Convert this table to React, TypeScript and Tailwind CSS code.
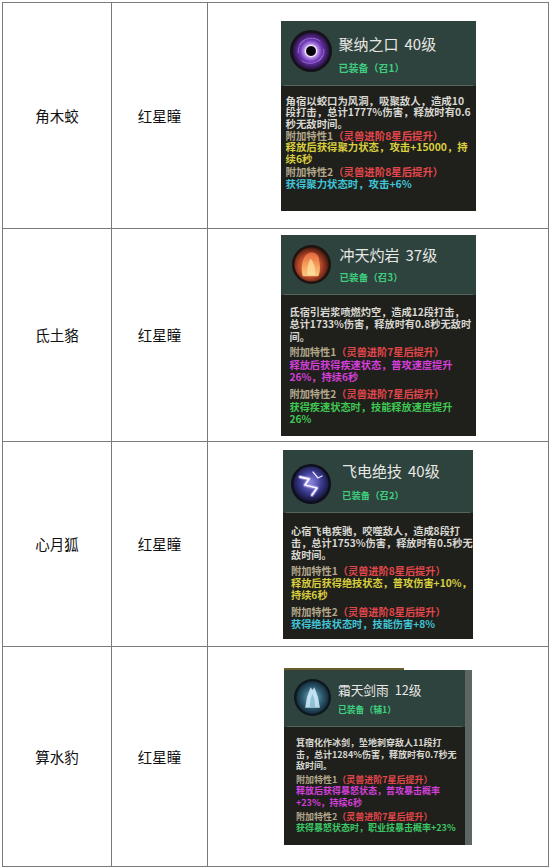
import React from 'react'

type Trait = { req: string; lines: string[]; color: string }

interface Skill {
  title: string
  level: string
  equip: string
  icon: 'vortex' | 'flame' | 'bolt' | 'ice'
  desc: string[]
  t1: Trait
  t2: Trait
  // per-card measurements taken from the screenshot
  box: string
  head: string
  pad: string
  icon_: string
  texts: string
  titleCls: string
  subCls: string
  body: string
  gap1: string
  gap2: string
  framed?: boolean
}

const YELLOW = 'text-[#d9cf3e]'
const CYAN = 'text-[#40c4d6]'
const MAGENTA = 'text-[#d33fd8]'
const GREEN = 'text-[#3fc852]'

const skills: Skill[] = [
  {
    title: '聚纳之口',
    level: '40级',
    equip: '已装备（召1）',
    icon: 'vortex',
    desc: ['角宿以蛟口为风洞，吸聚敌人，造成10', '段打击，总计1777%伤害，释放时有0.6', '秒无敌时间。'],
    t1: { req: '（灵兽进阶8星后提升）', lines: ['释放后获得聚力状态，攻击+15000，持', '续6秒'], color: YELLOW },
    t2: { req: '（灵兽进阶8星后提升）', lines: ['获得聚力状态时，攻击+6%'], color: CYAN },
    box: 'w-[195px] h-[190px]',
    head: 'h-[65px]',
    pad: 'pl-[9px]',
    icon_: 'mt-[9px] w-[42px] h-[42px]',
    texts: 'ml-[7px] mt-[14px]',
    titleCls: 'text-[15px] leading-[18px]',
    subCls: 'mt-[8px] text-[10px] leading-[14px]',
    body: 'pt-[9px] pl-[5px] text-[10.4px] leading-[11.7px]',
    gap1: 'h-0',
    gap2: 'h-[1.6px]',
  },
  {
    title: '冲天灼岩',
    level: '37级',
    equip: '已装备（召3）',
    icon: 'flame',
    desc: ['氐宿引岩浆喷燃灼空，造成12段打击，', '总计1733%伤害，释放时有0.8秒无敌时', '间。'],
    t1: { req: '（灵兽进阶7星后提升）', lines: ['释放后获得疾速状态，普攻速度提升', '26%，持续6秒'], color: MAGENTA },
    t2: { req: '（灵兽进阶7星后提升）', lines: ['获得疾速状态时，技能释放速度提升', '26%'], color: GREEN },
    box: 'w-[195px] h-[201px]',
    head: 'h-[60px]',
    pad: 'pl-[11px]',
    icon_: 'mt-[10px] w-[39px] h-[39px]',
    texts: 'ml-[9px] mt-[11px]',
    titleCls: 'text-[15px] leading-[18px]',
    subCls: 'mt-[6px] text-[9.6px] leading-[14px]',
    body: 'pt-[11px] pl-[9px] text-[10.2px] leading-[12.5px]',
    gap1: 'h-[3px]',
    gap2: 'h-[4.5px]',
  },
  {
    title: '飞电绝技',
    level: '40级',
    equip: '已装备（召2）',
    icon: 'bolt',
    desc: ['心宿飞电疾驰，咬噬敌人，造成8段打', '击，总计1753%伤害，释放时有0.5秒无', '敌时间。'],
    t1: { req: '（灵兽进阶8星后提升）', lines: ['释放后获得绝技状态，普攻伤害+10%，', '持续6秒'], color: YELLOW },
    t2: { req: '（灵兽进阶8星后提升）', lines: ['获得绝技状态时，技能伤害+8%'], color: CYAN },
    box: 'w-[190px] h-[189px]',
    head: 'h-[63px]',
    pad: 'pl-[8px]',
    icon_: 'mt-[14px] w-[40px] h-[40px]',
    texts: 'ml-[11px] mt-[12px]',
    titleCls: 'text-[15px] leading-[18px]',
    subCls: 'mt-[8px] text-[9.4px] leading-[14px]',
    body: 'pt-[12px] pl-[8px] text-[10.2px] leading-[12px]',
    gap1: 'h-[4.5px]',
    gap2: 'h-[4.5px]',
  },
  {
    title: '霜天剑雨',
    level: '12级',
    equip: '已装备（辅1）',
    icon: 'ice',
    desc: ['箕宿化作冰剑，坠地刺穿敌人11段打', '击，总计1284%伤害，释放时有0.7秒无', '敌时间。'],
    t1: { req: '（灵兽进阶7星后提升）', lines: ['释放后获得暴怒状态，普攻暴击概率', '+23%，持续6秒'], color: MAGENTA },
    t2: { req: '（灵兽进阶7星后提升）', lines: ['获得暴怒状态时，职业技暴击概率+23%'], color: 'text-[#3cc866]' },
    box: 'w-[181px] h-[175px]',
    head: 'h-[57px]',
    pad: 'pl-[10px]',
    icon_: 'mt-[9px] w-[37px] h-[37px]',
    texts: 'ml-[7px] mt-[12px]',
    titleCls: 'text-[12.7px] leading-[16px]',
    subCls: 'mt-[5px] text-[8.8px] leading-[13px]',
    body: 'pt-[10px] pl-[12px] text-[9px] leading-[11.6px]',
    gap1: 'h-[2px]',
    gap2: 'h-[2px]',
    framed: true,
  },
]

const rows = [
  { name: '角木蛟', h: 'h-[226px]' },
  { name: '氐土貉', h: 'h-[213px]' },
  { name: '心月狐', h: 'h-[205px]' },
  { name: '算水豹', h: 'h-[220px]' },
]

function SkillIcon({ kind, className }: { kind: Skill['icon']; className: string }) {
  if (kind === 'vortex') {
    return (
      <svg viewBox="0 0 40 40" className={className}>
        <defs>
          <radialGradient id="g-vortex" cx="50%" cy="50%" r="50%">
            <stop offset="0" stopColor="#000" />
            <stop offset="0.24" stopColor="#07030c" />
            <stop offset="0.3" stopColor="#f6ecff" />
            <stop offset="0.38" stopColor="#b58ae8" />
            <stop offset="0.6" stopColor="#6c36b4" />
            <stop offset="1" stopColor="#29113f" />
          </radialGradient>
        </defs>
        <circle cx="20" cy="20" r="20" fill="#141119" />
        <circle cx="20" cy="20" r="17.5" fill="url(#g-vortex)" />
        <g fill="none" stroke="#c8a4ff" strokeWidth="0.9" opacity="0.55">
          <path d="M9 14 C13 7 24 6 29 11" />
          <path d="M31 24 C28 32 17 34 11 29" />
          <path d="M8 22 C7 17 10 12 14 10" />
          <path d="M32 18 C33 22 31 27 27 30" />
        </g>
      </svg>
    )
  }
  if (kind === 'flame') {
    return (
      <svg viewBox="0 0 40 40" className={className}>
        <defs>
          <radialGradient id="g-flame-bg" cx="45%" cy="55%" r="55%">
            <stop offset="0" stopColor="#f08a4a" />
            <stop offset="0.6" stopColor="#b8482a" />
            <stop offset="1" stopColor="#4a1a0e" />
          </radialGradient>
          <linearGradient id="g-flame" x1="0" y1="1" x2="0" y2="0">
            <stop offset="0" stopColor="#ffd88a" />
            <stop offset="0.5" stopColor="#f8a258" />
            <stop offset="1" stopColor="#e86a44" />
          </linearGradient>
        </defs>
        <circle cx="20" cy="20" r="20" fill="#1d1310" />
        <circle cx="20" cy="20" r="17.5" fill="url(#g-flame-bg)" />
        <path d="M11 32 C9 25 10 17 13 12 C15 9 18 7 22 8 C26 9 28 12 28 17 C29 22 29 27 27 32 Z" fill="url(#g-flame)" opacity="0.9" />
        <path d="M16 31 C15 25 16 19 19 14 C22 17 24 22 24 31 Z" fill="#ffe6a8" opacity="0.7" />
      </svg>
    )
  }
  if (kind === 'bolt') {
    return (
      <svg viewBox="0 0 40 40" className={className}>
        <defs>
          <radialGradient id="g-bolt" cx="50%" cy="45%" r="55%">
            <stop offset="0" stopColor="#8c86e0" />
            <stop offset="0.55" stopColor="#3c3c92" />
            <stop offset="1" stopColor="#131336" />
          </radialGradient>
        </defs>
        <circle cx="20" cy="20" r="20" fill="#0f0f1c" />
        <circle cx="20" cy="20" r="17.5" fill="url(#g-bolt)" />
        <g fill="none" strokeLinecap="round" strokeLinejoin="round">
          <path d="M9 13 L18 15 L14 21 L26 24 L21 31" stroke="#b8a8ff" strokeWidth="4" opacity="0.5" />
          <path d="M9 13 L18 15 L14 21 L26 24 L21 31" stroke="#fbf8ff" strokeWidth="1.8" />
          <path d="M22 8 L27 14 L31 12" stroke="#e8e0ff" strokeWidth="1.3" />
        </g>
      </svg>
    )
  }
  return (
    <svg viewBox="0 0 40 40" className={className}>
      <defs>
        <radialGradient id="g-ice" cx="50%" cy="50%" r="55%">
          <stop offset="0" stopColor="#7fb6cc" />
          <stop offset="0.55" stopColor="#2f5d72" />
          <stop offset="1" stopColor="#0f2430" />
        </radialGradient>
      </defs>
      <circle cx="20" cy="20" r="20" fill="#0d171d" />
      <circle cx="20" cy="20" r="17.5" fill="url(#g-ice)" />
      <path d="M12 31 L14 20 L16 14 L18 9 L20 12 L22 9 L24 14 L26 20 L28 31 Z" fill="#d6f0fb" opacity="0.85" />
      <path d="M17 31 L18 21 L20 16 L22 21 L23 31 Z" fill="#7ab4cc" opacity="0.7" />
    </svg>
  )
}

function SkillCard({ s }: { s: Skill }) {
  const card = (
    <div className={`flex flex-col overflow-hidden ${s.box}`}>
      <div className={`flex flex-col shrink-0 bg-[#2e423e] ${s.head}`}>
        <div className={`flex flex-1 items-start ${s.pad}`}>
          <SkillIcon kind={s.icon} className={`shrink-0 ${s.icon_}`} />
          <div className={s.texts}>
            <div className={`whitespace-nowrap text-[#e8e8e4] ${s.titleCls}`}>
              {s.title}
              <span className="ml-[6px]">{s.level}</span>
            </div>
            <div className={`whitespace-nowrap font-bold text-[#3fcf7e] ${s.subCls}`}>{s.equip}</div>
          </div>
        </div>
        <div className="mx-[3px] h-px bg-[#55655f]" />
      </div>
      <div className={`flex-1 whitespace-nowrap bg-[#1f1f1c] font-semibold text-[#d8d8d1] ${s.body}`}>
        {s.desc.map((l) => (
          <div key={l}>{l}</div>
        ))}
        <div className={s.gap1} />
        <div>
          <span className="text-[#b3a78b]">附加特性1</span>
          <span className="text-[#e2474b]">{s.t1.req}</span>
        </div>
        {s.t1.lines.map((l) => (
          <div key={l} className={s.t1.color}>{l}</div>
        ))}
        <div className={s.gap2} />
        <div>
          <span className="text-[#b3a78b]">附加特性2</span>
          <span className="text-[#e2474b]">{s.t2.req}</span>
        </div>
        {s.t2.lines.map((l) => (
          <div key={l} className={s.t2.color}>{l}</div>
        ))}
      </div>
    </div>
  )

  if (!s.framed) return card

  // last screenshot was cropped a little wider: game background shows on top and right
  return (
    <div className="flex w-[188px] flex-col">
      <div className="h-[2px] w-[120px] bg-[#6b5a2c]" />
      <div className="flex">
        {card}
        <div className="w-[7px] bg-[#5d6663]" />
      </div>
    </div>
  )
}

export default function App() {
  return (
    <div className="h-[868px] w-[550px] bg-white pl-[2px] pt-[2px] font-['Noto_Sans_CJK_SC',sans-serif]">
      <table className="w-[547px] table-fixed border-collapse">
        <colgroup>
          <col className="w-[109px]" />
          <col className="w-[96px]" />
          <col />
        </colgroup>
        <tbody>
          {rows.map((r, i) => (
            <tr key={r.name} className={r.h}>
              <td className="border border-[#7a7a7a] p-0 text-center align-middle text-[14.5px] text-[#111]">{r.name}</td>
              <td className="border border-[#7a7a7a] p-0 text-center align-middle text-[14.5px] text-[#111]">红星瞳</td>
              <td className="border border-[#7a7a7a] p-0 align-middle">
                <div className="flex items-center justify-center">
                  <SkillCard s={skills[i]} />
                </div>
              </td>
            </tr>
          ))}
        </tbody>
      </table>
    </div>
  )
}
